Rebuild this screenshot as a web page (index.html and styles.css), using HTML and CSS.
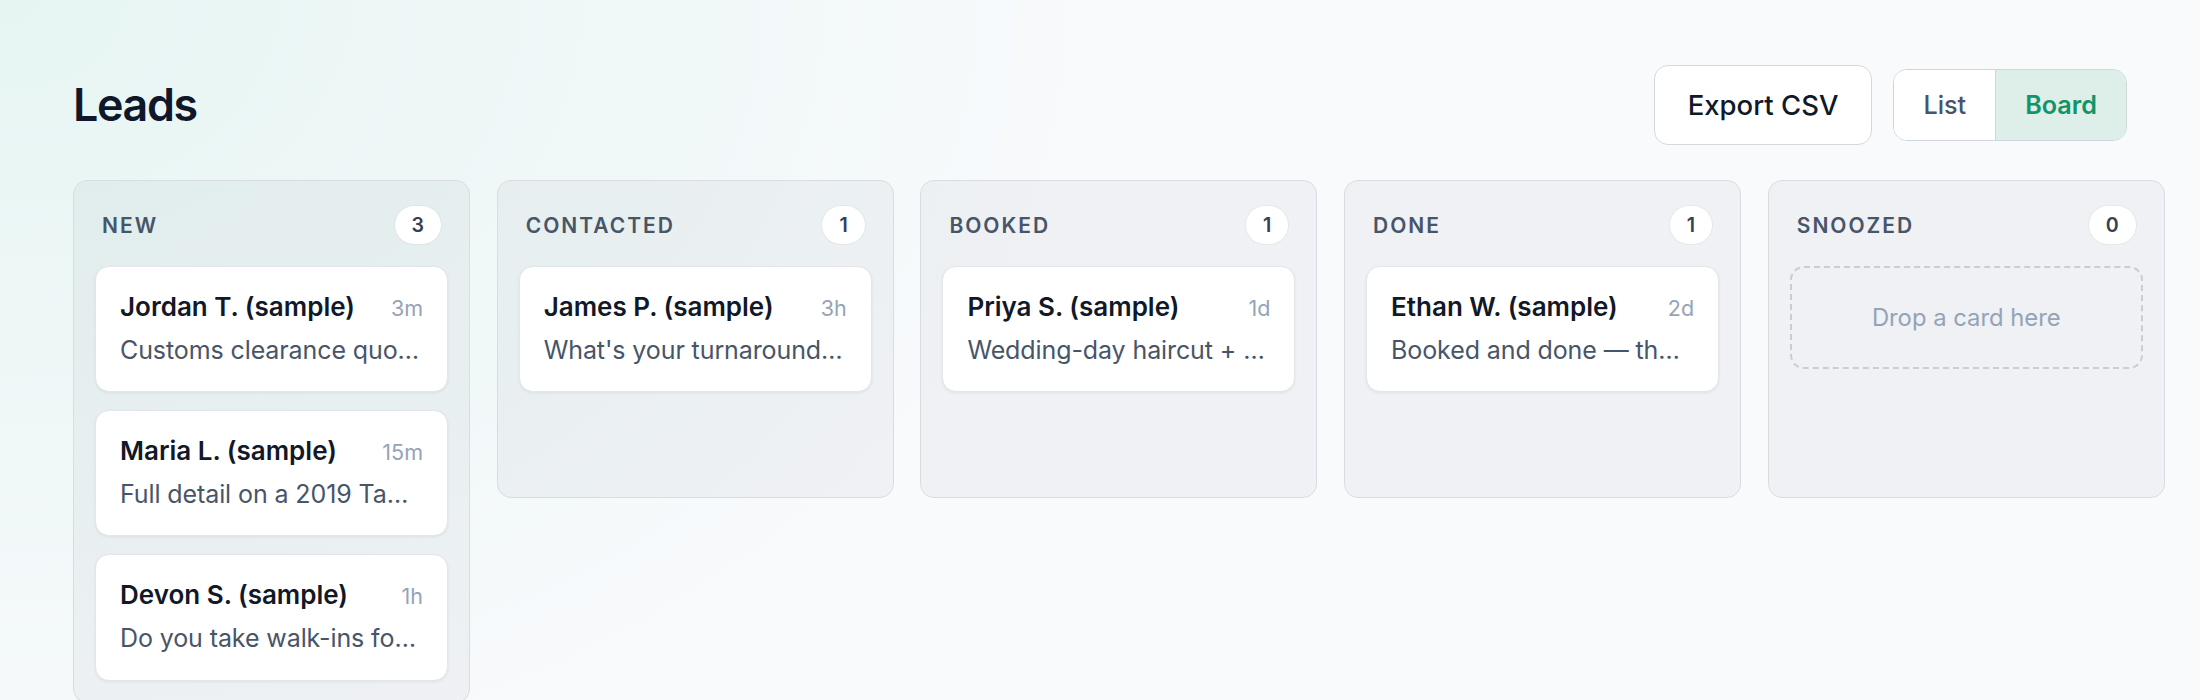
FILE: index.html
```html
<!DOCTYPE html>
<html lang="en">
<head>
<meta charset="utf-8">
<title>Leads</title>
<link rel="stylesheet" href="styles.css">
</head>
<body>
<main class="page">
  <header class="page-head">
    <h1 class="title">Leads</h1>
    <div class="actions">
      <button class="btn">Export CSV</button>
      <div class="toggle">
        <button class="seg">List</button>
        <button class="seg seg-active">Board</button>
      </div>
    </div>
  </header>

  <section class="board">
    <div class="col">
      <div class="col-head"><span class="col-title">New</span><span class="badge">3</span></div>
      <div class="cards">
        <article class="card">
          <div class="card-top"><span class="name">Jordan T. (sample)</span><span class="time">3m</span></div>
          <p class="preview">Customs clearance quote for an inbound container next week</p>
        </article>
        <article class="card">
          <div class="card-top"><span class="name">Maria L. (sample)</span><span class="time">15m</span></div>
          <p class="preview">Full detail on a 2019 Tahoe, interior and exterior</p>
        </article>
        <article class="card">
          <div class="card-top"><span class="name">Devon S. (sample)</span><span class="time">1h</span></div>
          <p class="preview">Do you take walk-ins for a quick beard trim?</p>
        </article>
      </div>
    </div>

    <div class="col">
      <div class="col-head"><span class="col-title">Contacted</span><span class="badge">1</span></div>
      <div class="cards">
        <article class="card">
          <div class="card-top"><span class="name">James P. (sample)</span><span class="time">3h</span></div>
          <p class="preview">What's your turnaround time on a rush order?</p>
        </article>
      </div>
    </div>

    <div class="col">
      <div class="col-head"><span class="col-title">Booked</span><span class="badge">1</span></div>
      <div class="cards">
        <article class="card">
          <div class="card-top"><span class="name">Priya S. (sample)</span><span class="time">1d</span></div>
          <p class="preview">Wedding-day haircut + styling for the groom</p>
        </article>
      </div>
    </div>

    <div class="col">
      <div class="col-head"><span class="col-title">Done</span><span class="badge">1</span></div>
      <div class="cards">
        <article class="card">
          <div class="card-top"><span class="name">Ethan W. (sample)</span><span class="time">2d</span></div>
          <p class="preview">Booked and done — the fade came out great</p>
        </article>
      </div>
    </div>

    <div class="col">
      <div class="col-head"><span class="col-title">Snoozed</span><span class="badge">0</span></div>
      <div class="cards">
        <div class="dropzone">Drop a card here</div>
      </div>
    </div>
  </section>
</main>
</body>
</html>
```

FILE: styles.css
```css
* { box-sizing: border-box; }

html, body {
  margin: 0;
  padding: 0;
}

body {
  font-family: Inter, "Noto Sans", "Liberation Sans", sans-serif;
  color: #0f172a;
  background-color: #f8fafc;
  background-image: radial-gradient(ellipse 1100px 800px at 0 0, rgba(16, 185, 129, 0.08), rgba(16, 185, 129, 0) 100%);
  background-repeat: no-repeat;
  min-height: 100vh;
  overflow-x: hidden;
}

.page {
  padding: 65px 73px 40px;
}

.page-head {
  display: flex;
  align-items: center;
  justify-content: space-between;
}

.title {
  margin: 0;
  font-size: 44.8px;
  font-weight: 600;
  letter-spacing: -0.03em;
  line-height: 1.2;
  color: #0f172a;
  position: relative;
  top: 1px;
}

.actions {
  display: flex;
  align-items: center;
  gap: 21px;
}

.btn {
  font-family: inherit;
  font-size: 27.5px;
  font-weight: 500;
  color: #111827;
  background: #ffffff;
  border: 1.5px solid #d5d9de;
  border-radius: 14px;
  height: 80px;
  padding: 0 33px;
  cursor: pointer;
}

.toggle {
  display: flex;
  height: 72px;
  border: 1.5px solid #d0d5db;
  border-radius: 14px;
  overflow: hidden;
  background: #ffffff;
}

.seg {
  font-family: inherit;
  font-size: 25.2px;
  font-weight: 500;
  color: #475569;
  background: #ffffff;
  border: 0;
  padding: 0 29px;
  cursor: pointer;
}

.seg + .seg {
  border-left: 1.5px solid #d0d5db;
}

.seg-active {
  background: #ddefe8;
  color: #129468;
  font-weight: 600;
}

.board {
  display: grid;
  grid-template-columns: repeat(5, 397px);
  column-gap: 26.7px;
  align-items: start;
  margin-top: 35px;
  margin-right: -73px;
  padding-right: 73px;
  overflow-x: auto;
}

.col {
  min-height: 318px;
  background: rgba(15, 23, 42, 0.04);
  border: 1.5px solid #d9dde2;
  border-radius: 14px;
  padding: 21px;
}

.col-head {
  display: flex;
  align-items: center;
  justify-content: space-between;
  padding: 4px 7px 5px;
  margin-bottom: 17px;
}

.col-title {
  font-size: 21px;
  font-weight: 600;
  text-transform: uppercase;
  letter-spacing: 0.095em;
  color: #475569;
}

.badge {
  display: inline-flex;
  align-items: center;
  justify-content: center;
  height: 38px;
  min-width: 40px;
  padding: 0 17px;
  border-radius: 19px;
  background: #ffffff;
  box-shadow: 0 0 0 1px rgba(15, 23, 42, 0.04);
  font-size: 19.6px;
  font-weight: 600;
  color: #334155;
}

.cards {
  display: flex;
  flex-direction: column;
  gap: 18px;
}

.card {
  background: #ffffff;
  border: 1.5px solid #e3e6ea;
  border-radius: 14px;
  padding: 21px 24px 22px;
  box-shadow: 0 1px 3px rgba(15, 23, 42, 0.07);
}

.card-top {
  display: flex;
  align-items: baseline;
  justify-content: space-between;
  gap: 12px;
}

.name {
  font-size: 26px;
  font-weight: 600;
  line-height: 1.45;
  color: #111827;
  white-space: nowrap;
  overflow: hidden;
  text-overflow: ellipsis;
}

.time {
  font-size: 21.5px;
  color: #94a3b8;
  white-space: nowrap;
}

.preview {
  margin: 6px 0 0;
  font-size: 25px;
  letter-spacing: -0.1px;
  line-height: 1.5;
  color: #475569;
  white-space: nowrap;
  overflow: hidden;
  text-overflow: ellipsis;
}

.dropzone {
  height: 103px;
  display: flex;
  align-items: center;
  justify-content: center;
  border: 2px dashed #c9ced5;
  border-radius: 14px;
  font-size: 23.8px;
  color: #94a3b8;
}
```
